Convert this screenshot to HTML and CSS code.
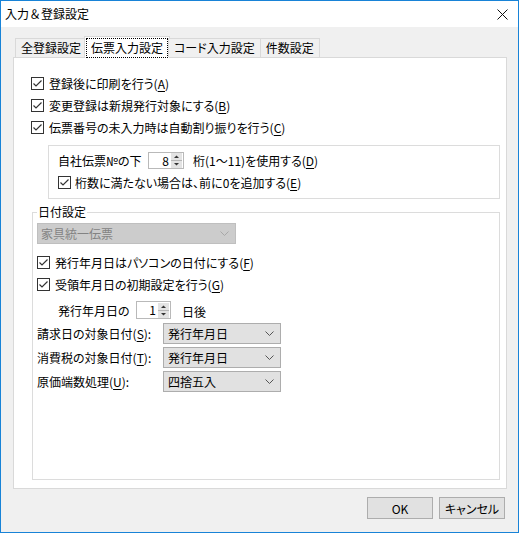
FILE: index.html
```html
<!DOCTYPE html>
<html lang="ja">
<head>
    <meta charset="UTF-8">
    <meta name="viewport" content="width=device-width, initial-scale=1.0">
    <title>入力＆登録設定</title>
    <link rel="stylesheet" href="styles.css">
</head>
<body>
    <div class="window">
        <header class="titlebar">
            <span class="title">入力＆登録設定</span>
            <span class="close-btn">
                <svg width="11" height="11" viewBox="0 0 11 11"><path d="M0.5 0.5 L10.5 10.5 M10.5 0.5 L0.5 10.5" stroke="#111" stroke-width="1" fill="none"/></svg>
            </span>
        </header>

        <div class="dialog-body">
            <nav class="tabs">
                <span class="tab">全登録設定</span>
                <span class="tab active"><span class="tab-focus">伝票入力設定</span></span>
                <span class="tab">コード入力設定</span>
                <span class="tab">件数設定</span>
            </nav>

            <section class="panel">
                <label class="check-row">
                    <svg class="checkbox" width="13" height="13" viewBox="0 0 13 13"><rect x="0.5" y="0.5" width="12" height="12" fill="#fff" stroke="#333"/><path d="M2.5 6.5 L5 9 L10.5 3.5" fill="none" stroke="#333" stroke-width="1.2"/></svg>
                    <span>登録後に印刷を行う(<u>A</u>)</span>
                </label>
                <label class="check-row">
                    <svg class="checkbox" width="13" height="13" viewBox="0 0 13 13"><rect x="0.5" y="0.5" width="12" height="12" fill="#fff" stroke="#333"/><path d="M2.5 6.5 L5 9 L10.5 3.5" fill="none" stroke="#333" stroke-width="1.2"/></svg>
                    <span>変更登録は新規発行対象にする(<u>B</u>)</span>
                </label>
                <label class="check-row">
                    <svg class="checkbox" width="13" height="13" viewBox="0 0 13 13"><rect x="0.5" y="0.5" width="12" height="12" fill="#fff" stroke="#333"/><path d="M2.5 6.5 L5 9 L10.5 3.5" fill="none" stroke="#333" stroke-width="1.2"/></svg>
                    <span>伝票番号の未入力時は自動割り振りを行う(<u>C</u>)</span>
                </label>

                <div class="sub-group">
                    <div class="spin-row">
                        <span class="spin-label">自社伝票№の下</span>
                        <span class="spin">
                            <span class="spin-value">8</span>
                            <span class="spin-buttons">
                                <svg width="11" height="15" viewBox="0 0 11 15"><rect x="0" y="0" width="11" height="15" fill="#e3e3e3"/><path d="M0 7.5 H11" stroke="#b5b5b5"/><path d="M3 5 L5.5 2.5 L8 5 Z" fill="#333"/><path d="M3 10 L5.5 12.5 L8 10 Z" fill="#333"/></svg>
                            </span>
                        </span>
                        <span class="spin-after">桁(1～11)を使用する(<u>D</u>)</span>
                    </div>
                    <label class="check-row">
                        <svg class="checkbox" width="13" height="13" viewBox="0 0 13 13"><rect x="0.5" y="0.5" width="12" height="12" fill="#fff" stroke="#333"/><path d="M2.5 6.5 L5 9 L10.5 3.5" fill="none" stroke="#333" stroke-width="1.2"/></svg>
                        <span>桁数に満たない場合は、前に0を追加する(<u>E</u>)</span>
                    </label>
                </div>

                <fieldset class="date-group">
                    <legend>日付設定</legend>

                    <div class="combo disabled">
                        <span>家具統一伝票</span>
                        <svg width="9" height="5" viewBox="0 0 9 5"><path d="M0.5 0.5 L4.5 4.5 L8.5 0.5" fill="none" stroke="#a8a8a8"/></svg>
                    </div>

                    <label class="check-row first">
                        <svg class="checkbox" width="13" height="13" viewBox="0 0 13 13"><rect x="0.5" y="0.5" width="12" height="12" fill="#fff" stroke="#333"/><path d="M2.5 6.5 L5 9 L10.5 3.5" fill="none" stroke="#333" stroke-width="1.2"/></svg>
                        <span>発行年月日はパソコンの日付にする(<u>F</u>)</span>
                    </label>
                    <label class="check-row">
                        <svg class="checkbox" width="13" height="13" viewBox="0 0 13 13"><rect x="0.5" y="0.5" width="12" height="12" fill="#fff" stroke="#333"/><path d="M2.5 6.5 L5 9 L10.5 3.5" fill="none" stroke="#333" stroke-width="1.2"/></svg>
                        <span>受領年月日の初期設定を行う(<u>G</u>)</span>
                    </label>

                    <div class="days-row">
                        <span class="days-label">発行年月日の</span>
                        <span class="spin small">
                            <span class="spin-value">1</span>
                            <span class="spin-buttons">
                                <svg width="11" height="15" viewBox="0 0 11 15"><rect x="0" y="0" width="11" height="15" fill="#e3e3e3"/><path d="M0 7.5 H11" stroke="#b5b5b5"/><path d="M3 5 L5.5 2.5 L8 5 Z" fill="#333"/><path d="M3 10 L5.5 12.5 L8 10 Z" fill="#333"/></svg>
                            </span>
                        </span>
                        <span class="days-after">日後</span>
                    </div>

                    <div class="field-row">
                        <span class="field-label">請求日の対象日付(<u>S</u>):</span>
                        <div class="combo">
                            <span>発行年月日</span>
                            <svg width="9" height="5" viewBox="0 0 9 5"><path d="M0.5 0.5 L4.5 4.5 L8.5 0.5" fill="none" stroke="#555"/></svg>
                        </div>
                    </div>
                    <div class="field-row">
                        <span class="field-label">消費税の対象日付(<u>T</u>):</span>
                        <div class="combo">
                            <span>発行年月日</span>
                            <svg width="9" height="5" viewBox="0 0 9 5"><path d="M0.5 0.5 L4.5 4.5 L8.5 0.5" fill="none" stroke="#555"/></svg>
                        </div>
                    </div>
                    <div class="field-row">
                        <span class="field-label">原価端数処理(<u>U</u>):</span>
                        <div class="combo">
                            <span>四捨五入</span>
                            <svg width="9" height="5" viewBox="0 0 9 5"><path d="M0.5 0.5 L4.5 4.5 L8.5 0.5" fill="none" stroke="#555"/></svg>
                        </div>
                    </div>
                </fieldset>
            </section>

            <footer class="buttons">
                <button class="btn">OK</button>
                <button class="btn">キャンセル</button>
            </footer>
        </div>
    </div>
</body>
</html>
```

FILE: styles.css
```css
* {
    margin: 0;
    padding: 0;
    box-sizing: border-box;
}

body {
    font-family: "Noto Sans CJK JP", "Noto Sans", sans-serif;
    font-size: 12px;
    font-feature-settings: "palt";
    color: #000;
    background: #f0f0f0;
}

u {
    text-decoration: underline;
    text-underline-offset: 2px;
}

.window {
    width: 519px;
    height: 533px;
    border: 1px solid #1883d7;
    background: #f0f0f0;
    display: flex;
    flex-direction: column;
}

/* title bar */
.titlebar {
    height: 26px;
    background: #fff;
    display: flex;
    align-items: center;
    justify-content: space-between;
    padding: 0 10px 0 4px;
}

.title {
    line-height: 16px;
    font-feature-settings: normal;
}

.close-btn {
    display: flex;
}

.dialog-body {
    flex: 1;
    padding: 9px 11px 0 12px;
    display: flex;
    flex-direction: column;
}

/* tabs */
.tabs {
    display: flex;
    align-items: flex-end;
    height: 22px;
    padding-left: 2px;
    margin-bottom: -1px;
    position: relative;
    z-index: 1;
}

.tab {
    height: 19px;
    margin-bottom: 1px;
    margin-right: -1px;
    padding: 0 5px;
    line-height: 18px;
    border: 1px solid #d9d9d9;
    border-bottom: none;
    background: #f0f0f0;
    white-space: nowrap;
}

.tab.active {
    height: 22px;
    margin: 0 -2px 0 -2px;
    padding: 2px 2px 0;
    background: #fff;
    line-height: 18px;
}

.tab-focus {
    display: block;
    height: 18px;
    padding: 0 4px;
    outline: 1px dotted #000;
}

/* panel */
.panel {
    height: 432px;
    border: 1px solid #d9d9d9;
    background: #fff;
    padding: 14px 6px 8px 17px;
    display: flex;
    flex-direction: column;
}

.check-row {
    display: flex;
    align-items: center;
    gap: 5px;
    height: 22px;
    white-space: nowrap;
}

.checkbox {
    flex: none;
}

.sub-group {
    margin: 7px 0 0 17px;
    border: 1px solid #dcdcdc;
    padding: 3px 0 5px 9px;
}

.sub-group .check-row {
    gap: 4px;
}

.spin-row {
    display: flex;
    align-items: center;
    height: 22px;
}

.spin-label {
    width: 90px;
}

.spin {
    display: flex;
    width: 36px;
    height: 17px;
    border: 1px solid #b9b9b9;
    background: #fff;
}

.spin.small {
    width: 35px;
    height: 18px;
}

.spin-value {
    flex: 1;
    text-align: right;
    padding-right: 2px;
    line-height: 15px;
}

.spin-buttons {
    display: flex;
    align-items: center;
    padding-right: 1px;
}

.spin-after {
    margin-left: 9px;
}

/* date group */
.date-group {
    flex: 1;
    min-width: 0;
    margin: 5px 0 0 1px;
    border: 1px solid #dcdcdc;
    padding: 3px 10px 0 4px;
}

.date-group legend {
    padding: 0 1px;
    line-height: 16px;
}

.combo {
    display: flex;
    align-items: center;
    justify-content: space-between;
    width: 118px;
    height: 21px;
    padding: 0 6px 0 4px;
    border: 1px solid #adadad;
    background: #e1e1e1;
}

.combo.disabled {
    width: 199px;
    padding-left: 3px;
    border-color: #bfbfbf;
    background: #cccccc;
    color: #838383;
}

.date-group .check-row.first {
    margin-top: 7px;
}

.days-row {
    display: flex;
    align-items: center;
    height: 24px;
    margin-top: 3px;
    padding-left: 21px;
}

.days-label {
    width: 78px;
}

.days-after {
    margin-left: 11px;
    padding-top: 3px;
}

.field-row {
    display: flex;
    align-items: center;
    height: 21px;
    margin-top: 3px;
}

.days-row + .field-row {
    margin-top: 1px;
}

.field-label {
    width: 126px;
    white-space: nowrap;
}

/* footer buttons */
.buttons {
    display: flex;
    justify-content: flex-end;
    gap: 6px;
    margin-top: 8px;
    padding-right: 2px;
}

.btn {
    width: 66px;
    height: 22px;
    font: inherit;
    font-feature-settings: "palt";
    border: 1px solid #adadad;
    background: #e1e1e1;
    color: #000;
}
```
